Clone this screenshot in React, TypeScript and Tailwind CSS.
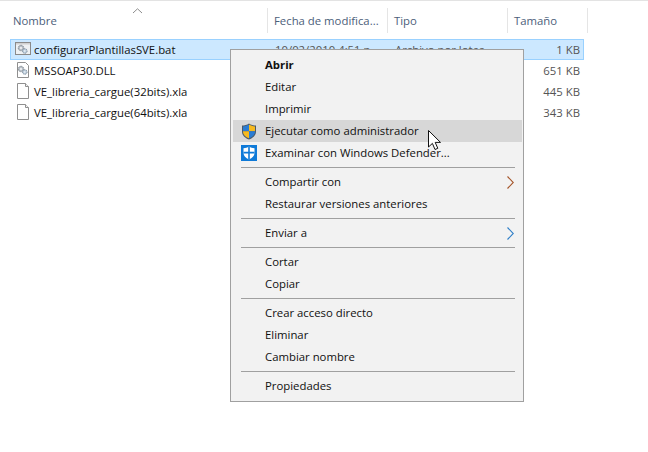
const font = { fontFamily: '"Open Sans", "Noto Sans", sans-serif' };

function GearFile({ bordered }: { bordered?: boolean }) {
  return (
    <svg width="16" height="16" viewBox="0 0 16 16" className="shrink-0">
      {bordered ? (
        <>
          <rect x="0.5" y="1.5" width="15" height="12" fill="#eef1f3" stroke="#8a8a8a" />
          <rect x="1" y="2" width="14" height="1.5" fill="#d0d0d0" />
        </>
      ) : (
        <path d="M2.5 0.5H10.5L13.5 3.5V15.5H2.5Z" fill="#fff" stroke="#8f8f8f" />
      )}
      <circle cx="6" cy="7" r="2.7" fill="#b9c0c7" stroke="#7c858e" strokeDasharray="1.2 0.6" />
      <circle cx="6" cy="7" r="0.9" fill="#fff" />
      <circle cx="9.8" cy="10" r="2.3" fill="#bccddc" stroke="#7c8c9a" strokeDasharray="1.2 0.6" />
      <circle cx="9.8" cy="10" r="0.7" fill="#fff" />
    </svg>
  );
}

function PlainFile() {
  return (
    <svg width="16" height="16" viewBox="0 0 16 16" className="shrink-0">
      <path d="M2.5 0.5H10.5L13.5 3.5V15.5H2.5Z" fill="#fff" stroke="#8f8f8f" />
      <path d="M10.5 0.5V3.5H13.5" fill="#f2f2f2" stroke="#8f8f8f" />
    </svg>
  );
}

function UacShield() {
  return (
    <svg width="16" height="17" viewBox="0 0 16 17">
      <path d="M8 0.5C10 2 12.5 2.6 15 2.6V8.5C15 12.4 12 15 8 16.5C4 15 1 12.4 1 8.5V2.6C3.5 2.6 6 2 8 0.5Z" fill="#4a5a6a" />
      <path d="M8 1.6V8.3H2V3.5C4 3.4 6.2 2.8 8 1.6Z" fill="#2a7cd3" />
      <path d="M8 1.6C9.8 2.8 12 3.4 14 3.5V8.3H8Z" fill="#f6b91e" />
      <path d="M2 8.3H8V15.3C4.6 14 2 11.8 2 8.5Z" fill="#f6b91e" />
      <path d="M14 8.3H8V15.3C11.4 14 14 11.8 14 8.5Z" fill="#2a7cd3" />
    </svg>
  );
}

function DefenderIcon() {
  return (
    <svg width="16" height="16" viewBox="0 0 16 16">
      <rect width="16" height="16" fill="#0f7ad8" />
      <path d="M8 1.5C9.6 2.6 11.4 3.1 13.5 3.2V8C13.5 11 11.3 13 8 14.5C4.7 13 2.5 11 2.5 8V3.2C4.6 3.1 6.4 2.6 8 1.5Z" fill="#fff" />
      <path d="M7.2 1.5H8.8V14.5H7.2Z M2.5 6.8H13.5V8.4H2.5Z" fill="#0f7ad8" />
    </svg>
  );
}

function Chevron({ color }: { color: string }) {
  return (
    <svg width="7" height="13" viewBox="0 0 7 13">
      <path d="M0.5 0.5L6.3 6.5L0.5 12.5" fill="none" stroke={color} strokeWidth="1.1" />
    </svg>
  );
}

function Sep() {
  return (
    <div className="flex h-[7px] items-center pl-[8px] pr-[7px]">
      <div className="h-px w-full bg-[#a0a0a0]" />
    </div>
  );
}

function Item({
  label,
  bold,
  hover,
  icon,
  arrow,
}: {
  label: string;
  bold?: boolean;
  hover?: boolean;
  icon?: React.ReactNode;
  arrow?: string;
}) {
  return (
    <div className={`flex h-[22px] items-center ${hover ? "bg-[#d7d7d7]" : ""}`}>
      <div className="flex w-[32px] shrink-0 items-center justify-center">{icon}</div>
      <span className={`flex-1 text-[11.35px] text-[#101010] ${bold ? "font-bold" : ""}`}>{label}</span>
      {arrow && (
        <span className="mr-[8px] flex items-center">
          <Chevron color={arrow} />
        </span>
      )}
    </div>
  );
}

function Row({
  icon,
  name,
  date,
  type,
  size,
  selected,
}: {
  icon: React.ReactNode;
  name: string;
  date?: string;
  type?: string;
  size: string;
  selected?: boolean;
}) {
  return (
    <div
      className={`ml-[10px] flex h-[21px] w-[574px] items-center border text-[11.35px] ${
        selected ? "border-[#99d1ff] bg-[#cce8ff]" : "border-transparent"
      }`}
    >
      <div className="flex w-[256px] shrink-0 items-center gap-[3px] pl-[4px] text-[#111]">
        {icon}
        <span className="whitespace-nowrap">{name}</span>
      </div>
      <span className="w-[120px] shrink-0 whitespace-nowrap pl-[8px] text-[#555]">{date}</span>
      <span className="w-[120px] shrink-0 whitespace-nowrap pl-[8px] text-[#555]">{type}</span>
      <span className="flex-1 pr-[3px] text-right text-[#555]">{size}</span>
    </div>
  );
}

function Column({ label, width }: { label: string; width: string }) {
  return (
    <div className={`flex h-[25px] shrink-0 items-center border-r border-[#e5e5e5] pl-[6px] text-[11.35px] text-[#4c607a] ${width}`}>
      {label}
    </div>
  );
}

export default function App() {
  return (
    <div className="relative h-[452px] w-[648px] overflow-hidden bg-white" style={font}>
      <div className="h-px bg-[#e3e3e3]" />
      <div className="relative mt-[7px] flex pl-[7px]">
        <Column label="Nombre" width="w-[261px]" />
        <Column label="Fecha de modifica..." width="w-[120px]" />
        <Column label="Tipo" width="w-[120px]" />
        <Column label="Tamaño" width="w-[80px]" />
        <svg width="11" height="6" viewBox="0 0 11 6" className="absolute left-[132px] top-[0px]">
          <path d="M1 5L5.5 0.8L10 5" fill="none" stroke="#8c8c8c" />
        </svg>
      </div>
      <div className="mt-[6px]">
        <Row selected icon={<GearFile bordered />} name="configurarPlantillasSVE.bat" date="10/02/2010 4:51 p..." type="Archivo por lotes" size="1 KB" />
        <Row icon={<GearFile />} name="MSSOAP30.DLL" size="651 KB" />
        <Row icon={<PlainFile />} name="VE_libreria_cargue(32bits).xla" size="445 KB" />
        <Row icon={<PlainFile />} name="VE_libreria_cargue(64bits).xla" size="343 KB" />
      </div>

      <div className="absolute left-[230px] top-[49px] w-[294px] border border-[#a0a0a0] bg-[#f2f2f2] py-[4px] pl-[2px] pr-[1px]">
        <Item label="Abrir" bold />
        <Item label="Editar" />
        <Item label="Imprimir" />
        <Item label="Ejecutar como administrador" hover icon={<UacShield />} />
        <Item label="Examinar con Windows Defender..." icon={<DefenderIcon />} />
        <Sep />
        <Item label="Compartir con" arrow="#a5552a" />
        <Item label="Restaurar versiones anteriores" />
        <Sep />
        <Item label="Enviar a" arrow="#2f7fc8" />
        <Sep />
        <Item label="Cortar" />
        <Item label="Copiar" />
        <Sep />
        <Item label="Crear acceso directo" />
        <Item label="Eliminar" />
        <Item label="Cambiar nombre" />
        <Sep />
        <Item label="Propiedades" />
      </div>

      <svg width="14" height="22" viewBox="0 0 14 22" className="absolute left-[428px] top-[130px]">
        <path d="M0.5 0.5V17L4.4 13.4L7 19.5L9.8 18.3L7.2 12.4H12.5Z" fill="#fff" stroke="#111" strokeLinejoin="round" />
      </svg>
    </div>
  );
}
